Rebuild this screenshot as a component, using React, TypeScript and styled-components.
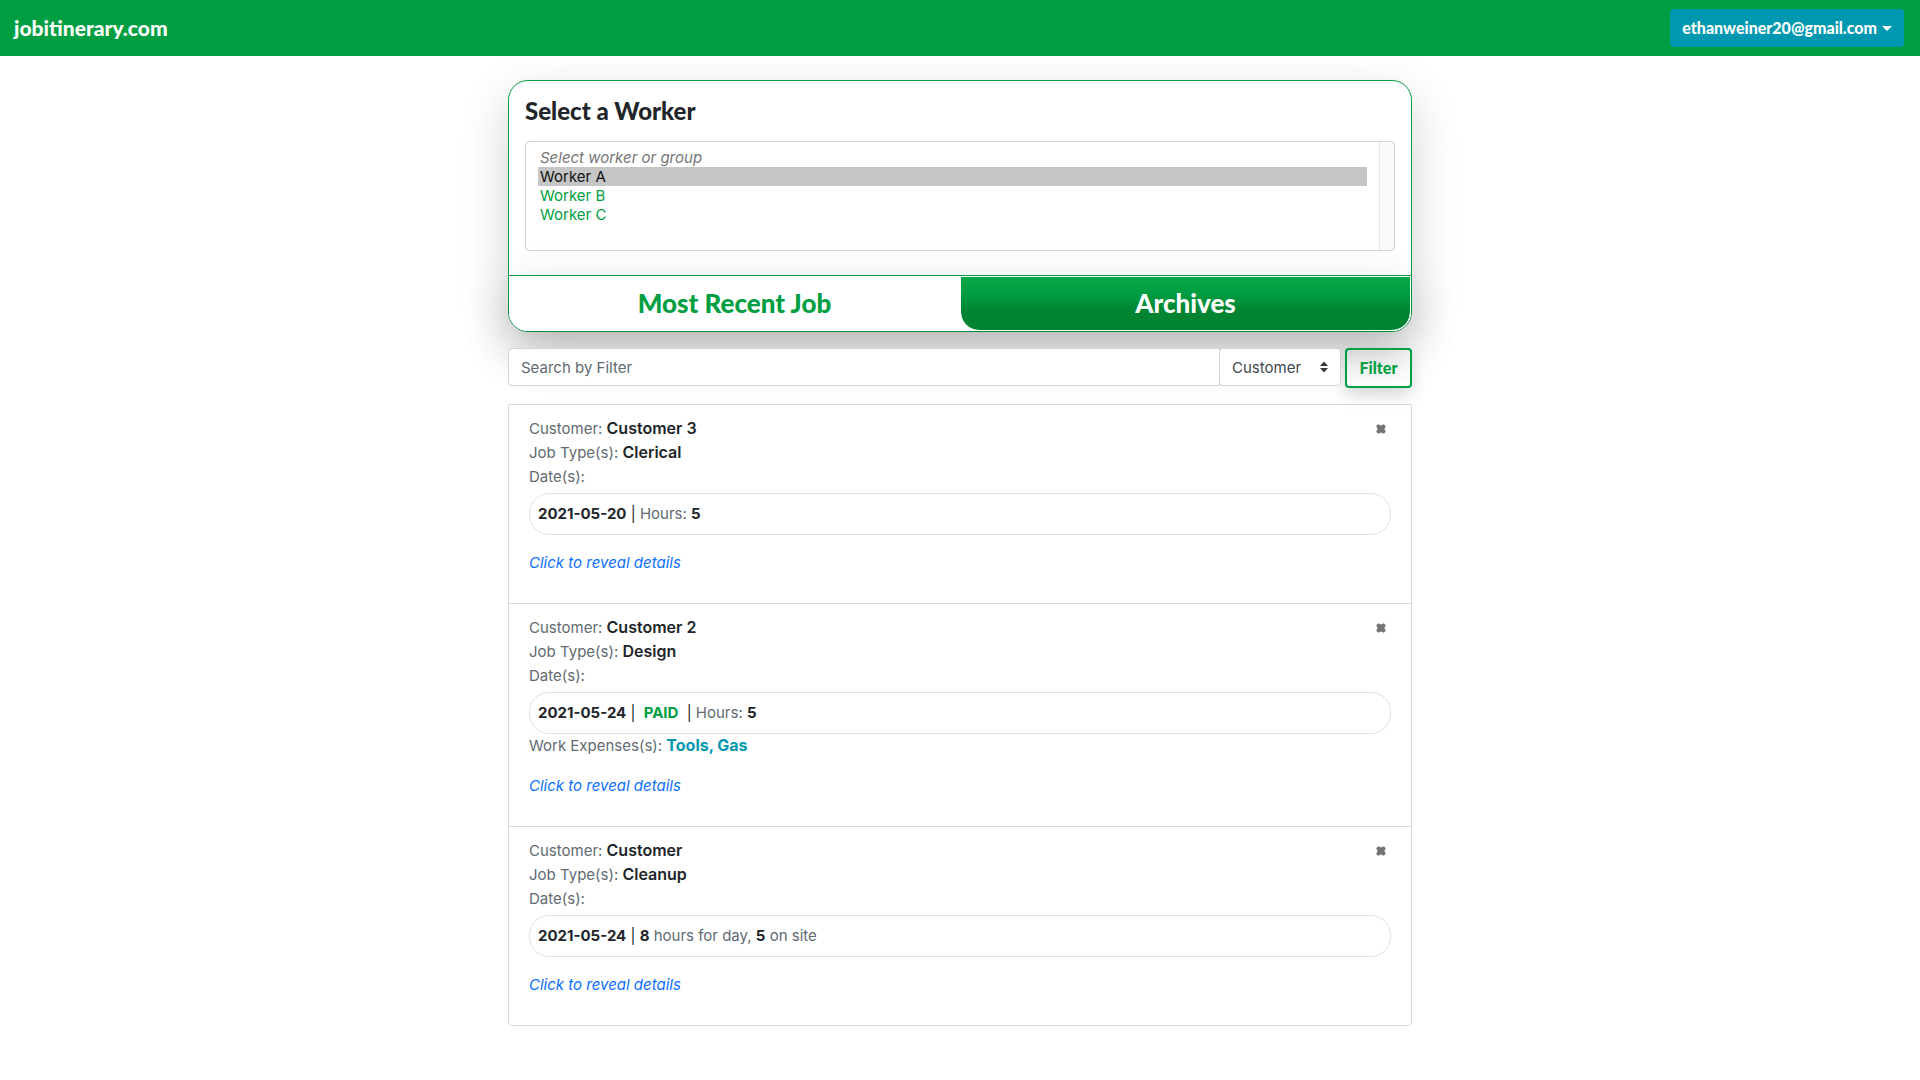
import React, { useState } from "react";
import styled, { createGlobalStyle } from "styled-components";

const green = "#009e42";
const teal = "#0098b0";
const ink = "#212529";
const muted = "#5f6a73";
const line = "#ced4da";
const display = `Lato, "Open Sans", sans-serif`;
const deepShadow = "0 16px 48px rgba(0, 0, 0, 0.175)";

const GlobalStyle = createGlobalStyle`
  *, *::before, *::after { box-sizing: border-box; }
  body {
    margin: 0;
    background: #fff;
    color: ${ink};
    font: 400 15px/24px Inter, "Liberation Sans", sans-serif;
  }
  button, input, select { font: inherit; margin: 0; }
`;

const Navbar = styled.header`
  display: flex;
  align-items: center;
  justify-content: space-between;
  padding: 9px 16px 9px 14px;
  background: ${green};
`;

const Brand = styled.a`
  color: #fff;
  font: 900 21px/32px ${display};
  text-decoration: none;
`;

const AccountButton = styled.button`
  display: flex;
  align-items: center;
  gap: 5px;
  padding: 7px 12px;
  border: 0;
  border-radius: 4px;
  background: ${teal};
  color: #fff;
  font: 900 16px/24px ${display};
  cursor: pointer;

  &::after {
    content: "";
    border: 5px solid transparent;
    border-top-color: #fff;
    border-bottom: 0;
  }
`;

const Page = styled.main`
  width: calc(100% - 32px);
  max-width: 904px;
  margin: 0 auto;
  padding: 24px 0 48px;
`;

const WorkerCard = styled.section`
  border: 1px solid ${green};
  border-radius: 20px;
  box-shadow: ${deepShadow};
`;

const WorkerBody = styled.div`
  padding: 16px 16px 24px;
`;

const Title = styled.label`
  display: block;
  margin-bottom: 16px;
  font: 900 24px/28px ${display};
`;

const WorkerList = styled.select`
  display: block;
  width: 100%;
  height: 110px;
  padding: 6px 27px 6px 12px;
  overflow: hidden;
  border: 1px solid ${line};
  border-radius: 4px;
  background: linear-gradient(to right, #e6e6e6 1px, #fafafa 1px) right / 15px 100% no-repeat #fff;
  outline: 0;
`;

const WorkerOption = styled.option<{ $hint?: boolean }>`
  height: 19px;
  min-height: 19px;
  padding: 0 2px;
  color: ${(p) => (p.$hint ? "#757575" : green)};
  font-size: 15px;
  font-style: ${(p) => (p.$hint ? "italic" : "normal")};
  line-height: 19px;

  &:checked {
    background-image: linear-gradient(#c6c6c6, #c6c6c6);
    color: #101010;
  }
`;

const Tabs = styled.div`
  display: grid;
  grid-template-columns: 1fr 1fr;
  border-top: 1px solid ${green};
  border-radius: 0 0 19px 19px;
  background: #fff;
  box-shadow: ${deepShadow};
`;

const Tab = styled.button<{ $active?: boolean }>`
  padding: 10px 16px;
  border: 1px solid #fff;
  border-radius: 0 0 19px 19px;
  background: ${(p) =>
    p.$active ? `linear-gradient(#0aa847, ${green} 30%, #008432 65%) padding-box` : "#fff"};
  color: ${(p) => (p.$active ? "#fff" : green)};
  font: 900 26px/33px ${display};
  cursor: pointer;
`;

const FilterBar = styled.form`
  display: flex;
  align-items: flex-start;
  margin: 16px 0;
`;

const SearchInput = styled.input`
  flex: 1;
  min-width: 0;
  height: 38px;
  padding: 6px 12px;
  border: 1px solid ${line};
  border-radius: 4px 0 0 4px;
  background: #fff;
  color: ${ink};

  &::placeholder { color: ${muted}; opacity: 1; }
`;

const FieldPicker = styled.div`
  position: relative;
  width: 122px;
  margin: 0 4px 0 -1px;

  svg {
    position: absolute;
    top: 13px;
    right: 13px;
    pointer-events: none;
  }
`;

const FieldSelect = styled.select`
  display: block;
  width: 100%;
  height: 38px;
  padding: 7px 28px 5px 12px;
  appearance: none;
  border: 1px solid ${line};
  border-radius: 4px;
  background: #fff;
  color: #40484e;
`;

const FilterButton = styled.button`
  min-width: 67px;
  height: 40px;
  padding: 0 12px;
  border: 2px solid ${green};
  border-radius: 4px;
  background: transparent;
  box-shadow: 0 8px 16px rgba(0, 0, 0, 0.15);
  color: ${green};
  font: 900 16px/24px ${display};
  cursor: pointer;
`;

const JobList = styled.ul`
  margin: 0;
  padding: 0;
  list-style: none;
  border: 1px solid #d8dadc;
  border-radius: 0 0 4px 4px;
  background: #fff;
`;

const JobItem = styled.li`
  padding: 12px 20px 28px;

  & + & { border-top: 1px solid #d8dadc; }
`;

const JobHead = styled.div`
  display: flex;
  justify-content: space-between;
`;

const JobLine = styled.div`
  color: ${muted};
`;

const Strong = styled.strong<{ $color?: string }>`
  color: ${(p) => p.$color ?? ink};
  font-size: 16px;
  font-weight: ${(p) => (p.$color ? 700 : 600)};
  line-height: 16px;
`;

const Divider = styled.span`
  color: ${ink};
`;

const DatePill = styled.div`
  margin-top: 4px;
  padding: 8px;
  border: 1px solid #dee2e6;
  border-radius: 20px;
  color: ${muted};

  ${Strong} {
    font-size: 15px;
    font-weight: 700;
  }
`;

const Paid = styled(Strong)`
  margin: 0 4px;
`;

const RevealLink = styled.a`
  display: block;
  width: fit-content;
  margin-top: 16px;
  color: #0d70fb;
  font-style: italic;
  text-decoration: none;
`;

const RemoveButton = styled.button`
  display: flex;
  align-items: center;
  padding: 0 5px;
  border: 0;
  background: none;
  color: #757575;
  cursor: pointer;
`;

type Job = {
  customer: string;
  type: string;
  date: string;
  paid?: boolean;
  hours: React.ReactNode;
  expenses?: string;
};

const jobs: Job[] = [
  { customer: "Customer 3", type: "Clerical", date: "2021-05-20", hours: <>Hours: <Strong>5</Strong></> },
  {
    customer: "Customer 2",
    type: "Design",
    date: "2021-05-24",
    paid: true,
    hours: <>Hours: <Strong>5</Strong></>,
    expenses: "Tools, Gas",
  },
  {
    customer: "Customer",
    type: "Cleanup",
    date: "2021-05-24",
    hours: <><Strong>8</Strong> hours for day, <Strong>5</Strong> on site</>,
  },
];

const RemoveIcon = () => (
  <svg width="10" height="10" viewBox="0 0 10 10" aria-hidden="true">
    <path
      d="M2.3 0.2 L5 1.6 L7.7 0.2 L9.8 2.3 L8.4 5 L9.8 7.7 L7.7 9.8 L5 8.4 L2.3 9.8 L0.2 7.7 L1.6 5 L0.2 2.3 Z"
      fill="currentColor"
    />
  </svg>
);

const JobRow = ({ job }: { job: Job }) => (
  <JobItem>
    <JobHead>
      <JobLine>Customer: <Strong>{job.customer}</Strong></JobLine>
      <RemoveButton type="button" aria-label={`Remove ${job.customer}`}>
        <RemoveIcon />
      </RemoveButton>
    </JobHead>
    <JobLine>Job Type(s): <Strong>{job.type}</Strong></JobLine>
    <JobLine>Date(s):</JobLine>
    <DatePill>
      <Strong>{job.date}</Strong> <Divider>|</Divider>{" "}
      {job.paid && <><Paid $color={green}>PAID</Paid> <Divider>|</Divider> </>}
      {job.hours}
    </DatePill>
    {job.expenses && (
      <JobLine>Work Expenses(s): <Strong $color={teal}>{job.expenses}</Strong></JobLine>
    )}
    <RevealLink href="#details">Click to reveal details</RevealLink>
  </JobItem>
);

export default function App() {
  const [tab, setTab] = useState("archives");
  return (
    <>
      <GlobalStyle />
      <Navbar>
        <Brand href="#home">jobitinerary.com</Brand>
        <AccountButton type="button">ethanweiner20@gmail.com</AccountButton>
      </Navbar>
      <Page>
        <WorkerCard>
          <WorkerBody>
            <Title htmlFor="worker">Select a Worker</Title>
            <WorkerList id="worker" size={5} defaultValue="a">
              <WorkerOption $hint value="" disabled>Select worker or group</WorkerOption>
              <WorkerOption value="a">Worker A</WorkerOption>
              <WorkerOption value="b">Worker B</WorkerOption>
              <WorkerOption value="c">Worker C</WorkerOption>
            </WorkerList>
          </WorkerBody>
          <Tabs>
            <Tab type="button" $active={tab === "recent"} onClick={() => setTab("recent")}>
              Most Recent Job
            </Tab>
            <Tab type="button" $active={tab === "archives"} onClick={() => setTab("archives")}>
              Archives
            </Tab>
          </Tabs>
        </WorkerCard>
        <FilterBar onSubmit={(e) => e.preventDefault()}>
          <SearchInput type="text" aria-label="Search by Filter" placeholder="Search by Filter" />
          <FieldPicker>
            <FieldSelect aria-label="Filter field" defaultValue="Customer">
              <option>Customer</option>
              <option>Job Type</option>
              <option>Date</option>
            </FieldSelect>
            <svg width="8" height="12" viewBox="0 0 8 12" aria-hidden="true">
              <path d="M4 0.5 L8 5 H0 Z M0 7 H8 L4 11.5 Z" fill="#343a40" />
            </svg>
          </FieldPicker>
          <FilterButton type="submit">Filter</FilterButton>
        </FilterBar>
        <JobList>
          {jobs.map((job) => (
            <JobRow key={job.customer} job={job} />
          ))}
        </JobList>
      </Page>
    </>
  );
}
